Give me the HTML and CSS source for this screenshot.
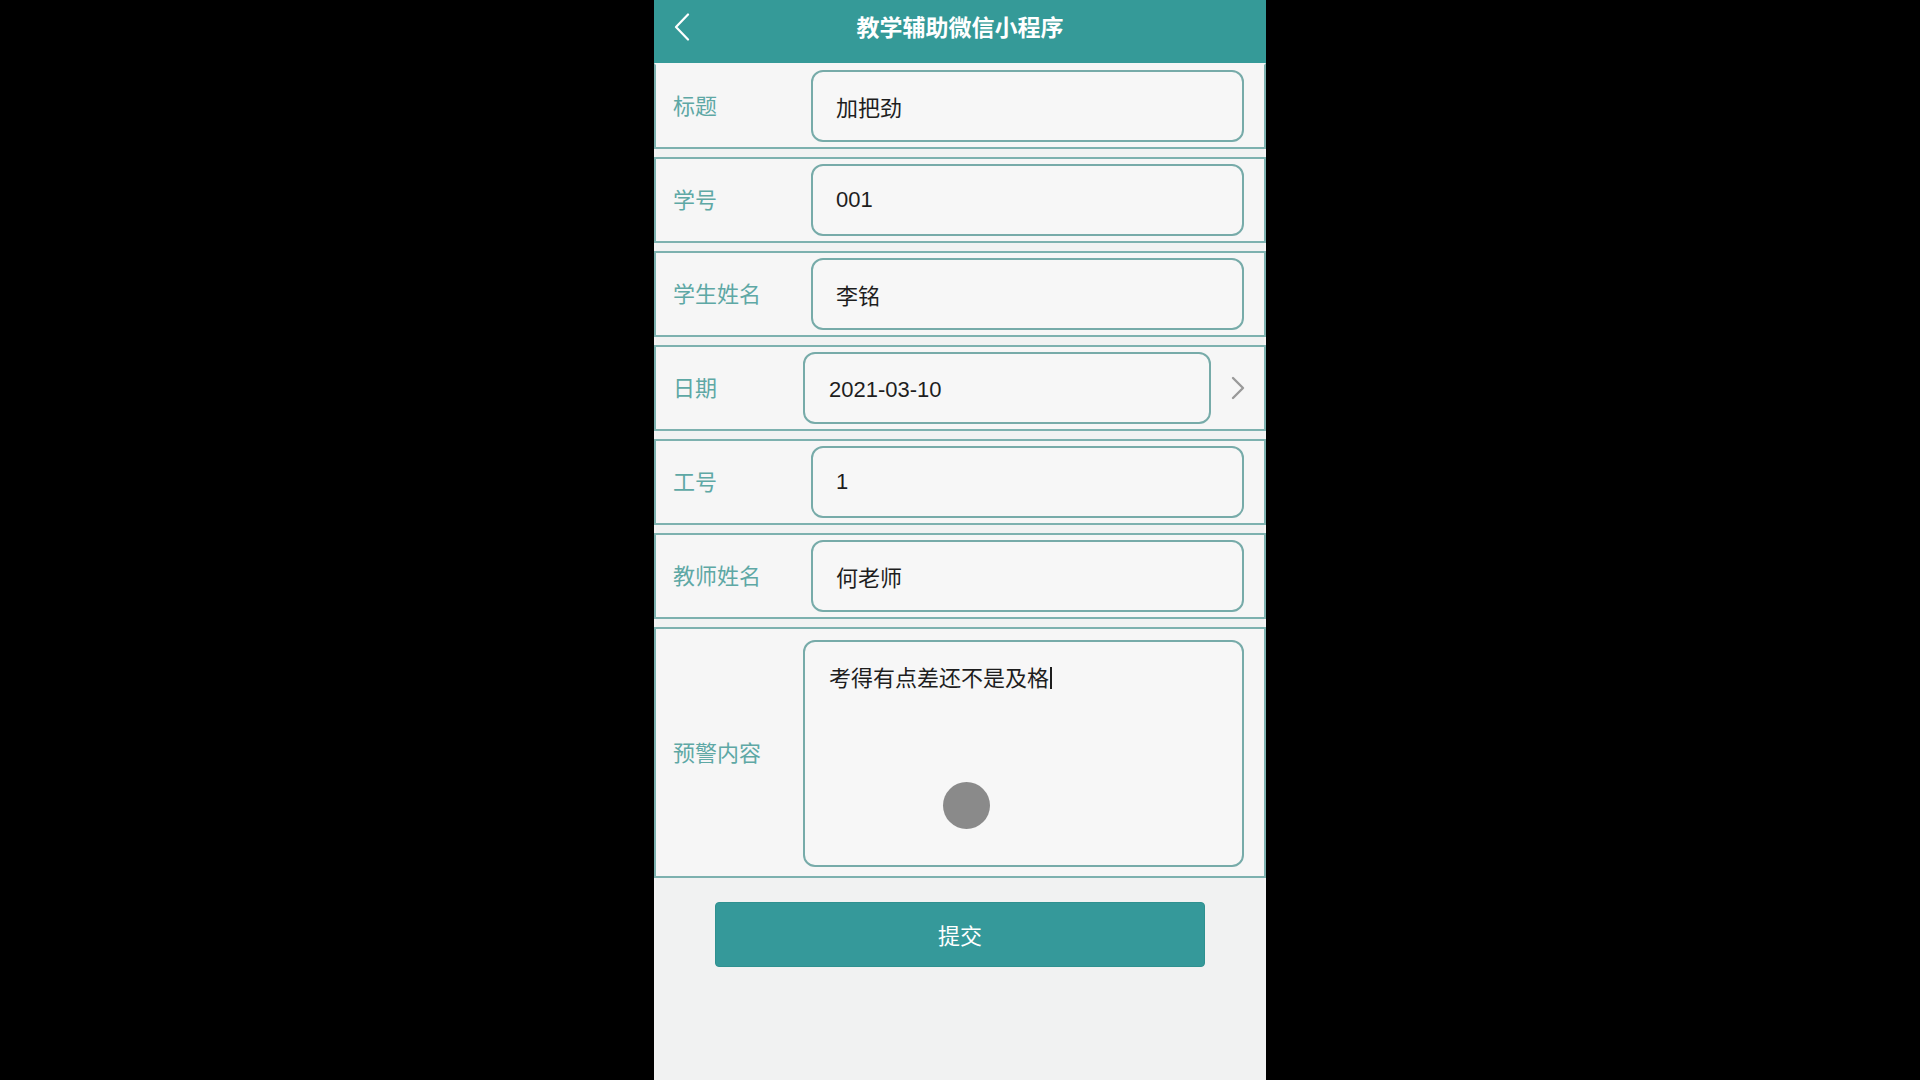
FILE: index.html
```html
<!DOCTYPE html>
<html lang="zh-CN">
<head>
<meta charset="utf-8">
<title>教学辅助微信小程序</title>
<link rel="stylesheet" href="styles.css">
</head>
<body>
<div class="phone">
  <header class="navbar">
    <span class="nav-back">
      <svg width="18" height="28" viewBox="0 0 18 28"><path d="M15 1.5 L3 14 L15 26.5" fill="none" stroke="#ffffff" stroke-width="2.2" stroke-linecap="round" stroke-linejoin="round"/></svg>
    </span>
    <h1 class="nav-title">教学辅助微信小程序</h1>
  </header>

  <main class="form">
    <div class="field field-first">
      <div class="field-label">标题</div>
      <div class="field-input">加把劲</div>
    </div>
    <div class="field">
      <div class="field-label">学号</div>
      <div class="field-input">001</div>
    </div>
    <div class="field">
      <div class="field-label">学生姓名</div>
      <div class="field-input">李铭</div>
    </div>
    <div class="field field-picker">
      <div class="field-label">日期</div>
      <div class="field-input">2021-03-10</div>
      <span class="picker-arrow">
        <svg width="14" height="24" viewBox="0 0 14 24"><path d="M2 2 L12 12 L2 22" fill="none" stroke="#9a9a9a" stroke-width="2.4" stroke-linecap="round" stroke-linejoin="round"/></svg>
      </span>
    </div>
    <div class="field">
      <div class="field-label">工号</div>
      <div class="field-input">1</div>
    </div>
    <div class="field">
      <div class="field-label">教师姓名</div>
      <div class="field-input">何老师</div>
    </div>
    <div class="field field-area">
      <div class="field-label">预警内容</div>
      <div class="field-textarea">考得有点差还不是及格<span class="caret"></span></div>
    </div>

    <button class="submit-btn">提交</button>
  </main>

  <div class="touch-dot"></div>
</div>
</body>
</html>
```

FILE: styles.css
```css
html, body {
  margin: 0;
  padding: 0;
  height: 100%;
  background: #000000;
}

body {
  font-family: "Liberation Sans", "Noto Sans CJK SC", sans-serif;
}

.phone {
  position: relative;
  width: 612px;
  height: 1080px;
  margin: 0 auto;
  background: #f1f2f2;
  overflow: hidden;
}

.navbar {
  position: relative;
  height: 63px;
  background: #359a98;
  display: flex;
  align-items: flex-start;
  justify-content: center;
}

.nav-back {
  position: absolute;
  left: 19px;
  top: 13px;
  width: 18px;
  height: 28px;
  display: block;
}

.nav-back svg {
  display: block;
}

.nav-title {
  margin: 0;
  line-height: 52px;
  font-size: 23px;
  font-weight: bold;
  color: #ffffff;
  font-family: "Noto Sans CJK SC", sans-serif;
}

.form {
  display: flex;
  flex-direction: column;
}

.field {
  box-sizing: border-box;
  height: 86px;
  margin-top: 8px;
  border: 2px solid #7db1af;
  background: #f6f6f6;
  display: flex;
  align-items: center;
}

.field-first {
  margin-top: 0;
  border-top-color: #f6f6f6;
}

.field-label {
  box-sizing: border-box;
  width: 155px;
  padding-left: 17px;
  padding-bottom: 4px;
  font-size: 22px;
  color: #5ea8a5;
  font-family: "Noto Sans CJK SC", sans-serif;
  flex-shrink: 0;
}

.field-input {
  box-sizing: border-box;
  flex: 1;
  height: 72px;
  margin-right: 20px;
  border: 2px solid #77aba9;
  border-radius: 12px;
  background: #f7f7f7;
  padding-left: 23px;
  display: flex;
  align-items: center;
  font-size: 22px;
  color: #1e1e1e;
}

.field-picker .field-label {
  width: 147px;
}

.field-picker .field-input {
  flex: 0 0 408px;
  margin-right: 0;
  padding-left: 24px;
  padding-top: 3px;
}

.picker-arrow {
  flex: 1;
  display: flex;
  justify-content: center;
  align-items: center;
}

.picker-arrow svg {
  display: block;
}

.field-area {
  height: 251px;
}

.field-area .field-label {
  width: 147px;
}

.field-textarea {
  box-sizing: border-box;
  flex: 1;
  height: 227px;
  margin: 2px 20px 0 0;
  border: 2px solid #77aba9;
  border-radius: 12px;
  background: #f7f7f7;
  padding: 19px 0 0 24px;
  font-size: 22px;
  line-height: 30px;
  color: #1e1e1e;
  font-family: "Noto Sans CJK SC", sans-serif;
}

.caret {
  display: inline-block;
  width: 2px;
  height: 22px;
  margin-left: 1px;
  background: #1e1e1e;
  vertical-align: -3px;
}

.submit-btn {
  box-sizing: border-box;
  align-self: center;
  width: 490px;
  height: 65px;
  margin-top: 24px;
  border: 1px solid #2f9190;
  border-radius: 4px;
  background: #35999a;
  color: #ffffff;
  font-size: 22px;
  font-family: "Noto Sans CJK SC", sans-serif;
  padding: 0 0 2px 0;
}

.touch-dot {
  position: absolute;
  left: 289px;
  top: 782px;
  width: 47px;
  height: 47px;
  border-radius: 50%;
  background: radial-gradient(circle, #8a8a8a 0%, #8a8a8a 72%, #b4b4b4 84%, rgba(200,200,200,0) 100%);
}
```
